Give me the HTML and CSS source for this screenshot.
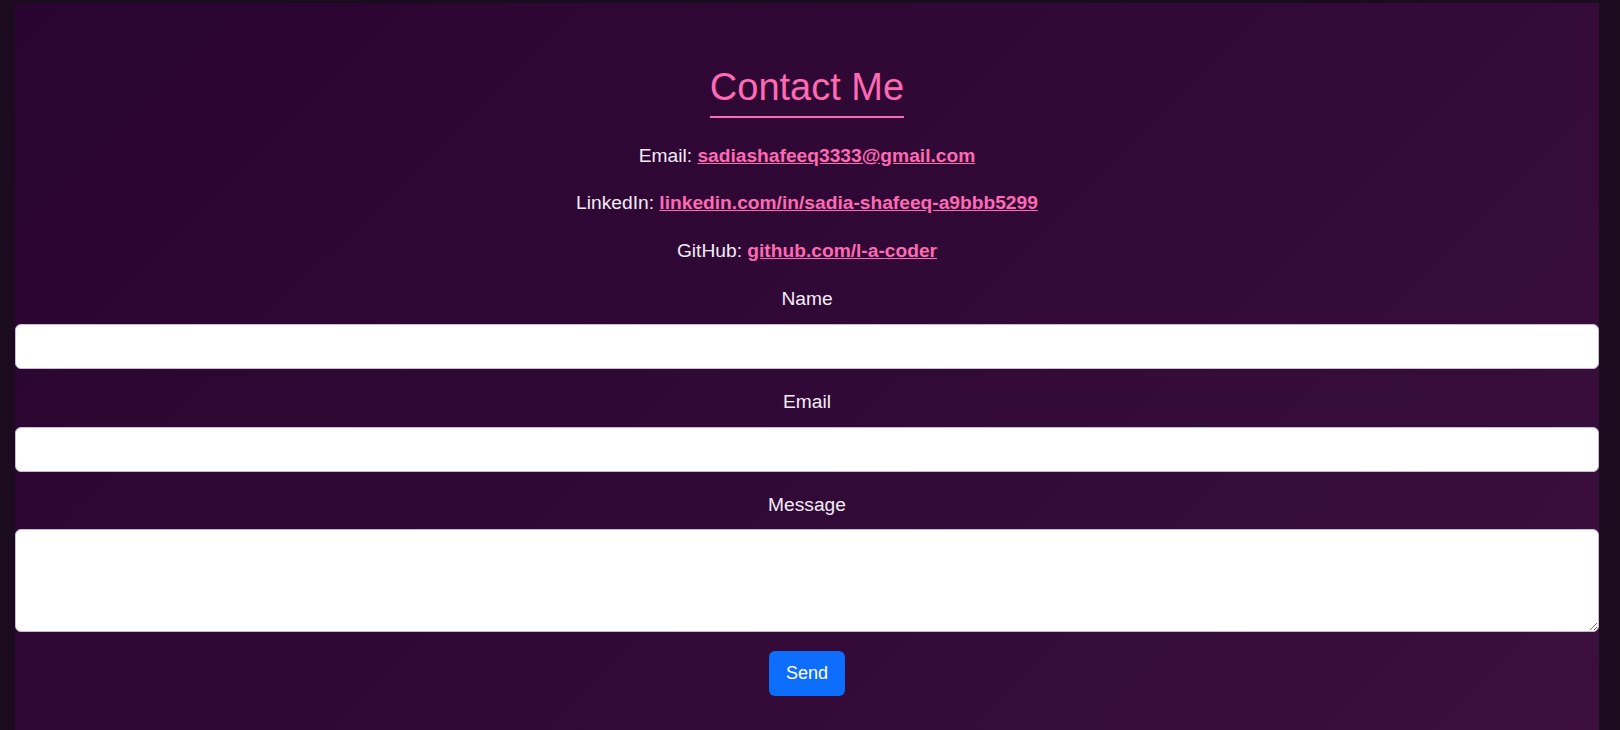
FILE: index.html
```html
<!DOCTYPE html>
<html lang="en">
<head>
<meta charset="utf-8">
<title>Contact Me</title>
<link rel="stylesheet" href="styles.css">
</head>
<body>
<section class="contact">
  <h2 class="contact-title">Contact Me</h2>
  <p class="contact-line">Email: <a href="#">sadiashafeeq3333@gmail.com</a></p>
  <p class="contact-line">LinkedIn: <a href="#">linkedin.com/in/sadia-shafeeq-a9bbb5299</a></p>
  <p class="contact-line">GitHub: <a href="#">github.com/l-a-coder</a></p>
  <form class="contact-form">
    <div class="field">
      <label class="field-label" for="name">Name</label>
      <input class="field-input" id="name" type="text">
    </div>
    <div class="field">
      <label class="field-label" for="email">Email</label>
      <input class="field-input" id="email" type="email">
    </div>
    <div class="field field-last">
      <label class="field-label field-label-tight" for="message">Message</label>
      <textarea class="field-input field-textarea" id="message"></textarea>
    </div>
    <button class="send-btn" type="button">Send</button>
  </form>
</section>
</body>
</html>
```

FILE: styles.css
```css
html, body {
  margin: 0;
  height: 100%;
}
body {
  background: #1a0c1e;
  padding: 3px 21px 0 15px;
  box-sizing: border-box;
  overflow: hidden;
  font-family: "Liberation Sans", Arial, sans-serif;
}
.contact {
  min-height: 800px;
  background: linear-gradient(135deg, #2a0430 0%, #310936 50%, #3c0f3f 100%);
  padding-top: 63px;
  text-align: center;
  color: #f4ecf8;
  font-size: 19.2px;
  line-height: 28.8px;
}
.contact-title {
  width: fit-content;
  margin: 0 auto 24px;
  font-size: 38px;
  font-weight: normal;
  line-height: 42px;
  color: #ff69b4;
  padding-bottom: 8px;
  border-bottom: 2px solid #ff69b4;
}
.contact-line {
  margin: 0 0 18.7px;
}
.contact-line a {
  color: #ff69b4;
  font-weight: bold;
  text-decoration: underline;
}
.contact-form {
  display: flex;
  flex-direction: column;
  align-items: center;
  padding-top: 1px;
}
.field {
  width: 100%;
  display: flex;
  flex-direction: column;
  margin-bottom: 19px;
}
.field-label {
  margin-bottom: 10px;
}
.field-label-tight {
  margin-bottom: 9px;
}
.field-input {
  box-sizing: border-box;
  width: 100%;
  height: 45px;
  border: 1px solid #cbbad6;
  border-radius: 6px;
  background: #fff;
  font: inherit;
  padding: 8px 12px;
  margin: 0;
}
.field-textarea {
  height: 103px;
  display: block;
}
.field-last {
  margin-bottom: 19px;
}
.send-btn {
  background: #0d6efd;
  color: #fff;
  border: none;
  border-radius: 6px;
  font: inherit;
  font-size: 18px;
  padding: 9px 16.5px;
  line-height: 27px;
  cursor: pointer;
}
```
